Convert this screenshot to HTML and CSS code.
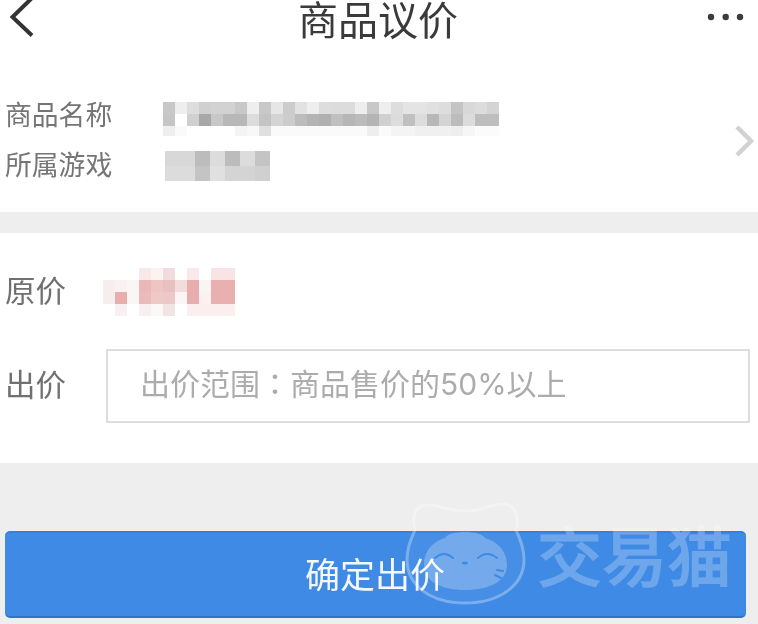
FILE: index.html
```html
<!DOCTYPE html>
<html lang="zh-CN">
<head>
<meta charset="utf-8">
<title>商品议价</title>
<link rel="stylesheet" href="styles.css">
</head>
<body>
<div class="page">
  <header class="nav">
    <svg class="back" width="52" height="70" viewBox="0 0 52 70"><path d="M32 -2L12.500 17L32 35.500"/></svg>
    <h1 class="title">商品议价</h1>
    <svg class="more" width="54" height="70" viewBox="0 0 54 70"><circle cx="7" cy="17" r="3.200"/><circle cx="21.700" cy="17" r="3.200"/><circle cx="36" cy="17" r="3.200"/></svg>
  </header>

  <section class="info">
    <div class="info-rows">
      <div class="info-row">
        <span class="info-label">商品名称</span>
        <svg class="mosaic mosaic-name" width="336" height="34" viewBox="0 0 336 34" shape-rendering="crispEdges">
          <g>
            <rect x="0" width="12" height="12" fill="#c8c8c8"/><rect x="12" width="12" height="12" fill="#eeeeee"/><rect x="24" width="12" height="12" fill="#dddddd"/><rect x="36" width="12" height="12" fill="#d0d0d0"/><rect x="48" width="12" height="12" fill="#d2d2d2"/><rect x="60" width="12" height="12" fill="#d2d2d2"/><rect x="72" width="12" height="12" fill="#c8c8c8"/><rect x="84" width="12" height="12" fill="#eeeeee"/><rect x="96" width="12" height="12" fill="#c8c8c8"/><rect x="108" width="12" height="12" fill="#e6e6e6"/><rect x="120" width="12" height="12" fill="#cccccc"/><rect x="132" width="12" height="12" fill="#e2e2e2"/><rect x="144" width="12" height="12" fill="#eeeeee"/><rect x="156" width="12" height="12" fill="#dddddd"/><rect x="168" width="12" height="12" fill="#dcdcdc"/><rect x="180" width="12" height="12" fill="#dcdcdc"/><rect x="192" width="12" height="12" fill="#eeeeee"/><rect x="204" width="12" height="12" fill="#c8c8c8"/><rect x="216" width="12" height="12" fill="#eeeeee"/><rect x="228" width="12" height="12" fill="#dddddd"/><rect x="240" width="12" height="12" fill="#e4e4e4"/><rect x="252" width="12" height="12" fill="#e4e4e4"/><rect x="264" width="12" height="12" fill="#e0e0e0"/><rect x="276" width="12" height="12" fill="#dddddd"/><rect x="288" width="12" height="12" fill="#c4c4c4"/><rect x="300" width="12" height="12" fill="#d8d8d8"/><rect x="312" width="12" height="12" fill="#dcdcdc"/><rect x="324" width="12" height="12" fill="#d4d4d4"/>
          </g>
          <g>
            <rect x="0" y="12" width="12" height="12" fill="#c6c6c6"/><rect x="12" y="12" width="12" height="12" fill="#ffffff"/><rect x="24" y="12" width="12" height="12" fill="#d0d0d0"/><rect x="36" y="12" width="12" height="12" fill="#a8a8a8"/><rect x="48" y="12" width="12" height="12" fill="#c8c8c8"/><rect x="60" y="12" width="12" height="12" fill="#b8b8b8"/><rect x="72" y="12" width="12" height="12" fill="#b8b8b8"/><rect x="84" y="12" width="12" height="12" fill="#dcdcdc"/><rect x="96" y="12" width="12" height="12" fill="#c4c4c4"/><rect x="108" y="12" width="12" height="12" fill="#d4d4d4"/><rect x="120" y="12" width="12" height="12" fill="#cccccc"/><rect x="132" y="12" width="12" height="12" fill="#bcbcbc"/><rect x="144" y="12" width="12" height="12" fill="#b4b4b4"/><rect x="156" y="12" width="12" height="12" fill="#b0b0b0"/><rect x="168" y="12" width="12" height="12" fill="#c0c0c0"/><rect x="180" y="12" width="12" height="12" fill="#b6b6b6"/><rect x="192" y="12" width="12" height="12" fill="#bcbcbc"/><rect x="204" y="12" width="12" height="12" fill="#b4b4b4"/><rect x="216" y="12" width="12" height="12" fill="#d0d0d0"/><rect x="228" y="12" width="12" height="12" fill="#dcdcdc"/><rect x="240" y="12" width="12" height="12" fill="#c0c0c0"/><rect x="252" y="12" width="12" height="12" fill="#dcdcdc"/><rect x="264" y="12" width="12" height="12" fill="#b8b8b8"/><rect x="276" y="12" width="12" height="12" fill="#d4d4d4"/><rect x="288" y="12" width="12" height="12" fill="#bcbcbc"/><rect x="300" y="12" width="12" height="12" fill="#dcdcdc"/><rect x="312" y="12" width="12" height="12" fill="#bebebe"/><rect x="324" y="12" width="12" height="12" fill="#bebebe"/>
          </g>
          <g>
            <rect x="0" y="24" width="12" height="10" fill="#eeeeee"/><rect x="12" y="24" width="12" height="10" fill="#fafafa"/><rect x="72" y="24" width="12" height="10" fill="#f4f4f4"/><rect x="84" y="24" width="12" height="10" fill="#f8f8f8"/><rect x="96" y="24" width="12" height="10" fill="#e0e0e0"/><rect x="108" y="24" width="96" height="10" fill="#fafafa"/><rect x="204" y="24" width="12" height="10" fill="#eeeeee"/><rect x="216" y="24" width="12" height="10" fill="#fafafa"/><rect x="228" y="24" width="24" height="10" fill="#f4f4f4"/><rect x="252" y="24" width="36" height="10" fill="#f0f0f0"/><rect x="288" y="24" width="12" height="10" fill="#eeeeee"/><rect x="300" y="24" width="12" height="10" fill="#f6f6f6"/><rect x="312" y="24" width="24" height="10" fill="#fbfbfb"/>
          </g>
        </svg>
      </div>
      <div class="info-row">
        <span class="info-label">所属游戏</span>
        <svg class="mosaic mosaic-game" width="105" height="30" viewBox="0 0 105 30" shape-rendering="crispEdges">
          <rect x="0" width="30" height="15" fill="#d8d8d8"/><rect x="30" width="15" height="15" fill="#bcbcbc"/><rect x="45" width="15" height="15" fill="#dcdcdc"/><rect x="60" width="15" height="15" fill="#bcbcbc"/><rect x="75" width="15" height="15" fill="#dcdcdc"/><rect x="90" width="15" height="15" fill="#c4c4c4"/>
          <rect x="0" y="15" width="30" height="15" fill="#dcdcdc"/><rect x="30" y="15" width="15" height="15" fill="#c4c4c4"/><rect x="45" y="15" width="15" height="15" fill="#e0e0e0"/><rect x="60" y="15" width="30" height="15" fill="#d4d4d4"/><rect x="90" y="15" width="15" height="15" fill="#d0d0d0"/>
        </svg>
      </div>
    </div>
    <svg class="chevron" width="20" height="32" viewBox="0 0 20 32"><path d="M2 2L16 16L2 30"/></svg>
  </section>

  <section class="offer">
    <div class="offer-row">
      <span class="offer-label">原价</span>
      <svg class="mosaic mosaic-price" width="132" height="48" viewBox="0 0 132 48" shape-rendering="crispEdges">
        <rect x="36" width="12" height="12" fill="#f8e8e8"/><rect x="48" width="12" height="12" fill="#fbf2f2"/><rect x="60" width="12" height="12" fill="#f0dcdc"/><rect x="84" width="12" height="12" fill="#f8eaea"/><rect x="108" width="24" height="12" fill="#f8e4e4"/>
        <rect x="0" y="12" width="12" height="12" fill="#f6eeee"/><rect x="12" y="12" width="12" height="12" fill="#f8f2f2"/><rect x="24" y="12" width="12" height="12" fill="#fbf6f6"/><rect x="36" y="12" width="12" height="12" fill="#ebb8b8"/><rect x="48" y="12" width="12" height="12" fill="#eec4c4"/><rect x="60" y="12" width="12" height="12" fill="#e8c0c0"/><rect x="72" y="12" width="12" height="12" fill="#f2dcdc"/><rect x="84" y="12" width="12" height="12" fill="#e8aeae"/><rect x="96" y="12" width="12" height="12" fill="#fbf4f4"/><rect x="108" y="12" width="24" height="12" fill="#e9b0b0"/>
        <rect x="0" y="24" width="12" height="12" fill="#f6eeee"/><rect x="12" y="24" width="12" height="12" fill="#e8aeae"/><rect x="24" y="24" width="12" height="12" fill="#fbf6f6"/><rect x="36" y="24" width="12" height="12" fill="#ebbaba"/><rect x="48" y="24" width="12" height="12" fill="#efc8c8"/><rect x="60" y="24" width="12" height="12" fill="#ecc8c8"/><rect x="72" y="24" width="12" height="12" fill="#fbf6f6"/><rect x="84" y="24" width="12" height="12" fill="#e8aeae"/><rect x="96" y="24" width="12" height="12" fill="#fcf0f0"/><rect x="108" y="24" width="24" height="12" fill="#e9b0b0"/>
        <rect x="12" y="36" width="12" height="12" fill="#f8f0f0"/><rect x="36" y="36" width="12" height="12" fill="#f8f0f0"/><rect x="48" y="36" width="12" height="12" fill="#fdf8f8"/><rect x="60" y="36" width="12" height="12" fill="#f0e4e4"/><rect x="84" y="36" width="48" height="12" fill="#fbeeee"/>
      </svg>
    </div>
    <div class="offer-row">
      <label class="offer-label" for="bid">出价</label>
      <input class="bid-input" id="bid" type="text" lang="zh-Hant" placeholder="出价范围：商品售价的50%以上">
    </div>
  </section>

  <div class="actions">
    <button class="confirm" type="button">确定出价</button>
  </div>

  <div class="watermark">
    <svg class="wm-logo" width="124" height="106" viewBox="404 501 124 106">
      <path class="wm-ring" d="M415 530C412 518 414 506 426 505C437 504 448 511 465 511C482 511 492 504 504 504C516 504 519 518 516 530C521 540 524 550 524 560C524 585 500 603 465 603C430 603 407 585 407 560C407 550 410 540 415 530Z"/>
      <path class="wm-head" d="M424 565C424 549 435 541 445 538C449 530 481 530 485 538C496 541 507 550 507 565C507 582 488 590 465 590C442 590 424 582 424 565Z"/>
      <path class="wm-face" d="M435 558Q444 550 453 558M478 558Q487 550 497 558M497 570L503 571M495 575L501 578"/>
      <ellipse class="wm-nose" cx="465" cy="563" rx="3" ry="1.500"/>
    </svg>
    <span class="wm-text">交易猫</span>
  </div>
</div>
</body>
</html>
```

FILE: styles.css
```css
* {
  box-sizing: border-box;
}

html,
body {
  margin: 0;
  padding: 0;
}

body {
  width: 758px;
  height: 624px;
  overflow: hidden;
  background: #eeeeee;
  font-family: "Noto Sans CJK SC", "Noto Sans", sans-serif;
}

.page {
  position: relative;
  width: 758px;
  height: 624px;
  overflow: hidden;
  background: #eeeeee;
  filter: blur(0.45px);
}

.nav {
  display: flex;
  justify-content: space-between;
  height: 70px;
  background: #ffffff;
}

.back path {
  fill: none;
  stroke: #333333;
  stroke-width: 4;
}

.title {
  margin: 0;
  font-size: 40px;
  font-weight: 400;
  line-height: 36px;
  color: #3a3a3a;
}

.more circle {
  fill: #3c3c3c;
}

.info {
  display: flex;
  justify-content: space-between;
  align-items: center;
  height: 142px;
  padding: 0 3px 0 5px;
  background: #ffffff;
}

.info-rows {
  display: flex;
  flex-direction: column;
}

.info-row {
  display: flex;
  align-items: center;
  height: 50px;
}

.info-label {
  width: 158px;
  flex: none;
  padding-bottom: 4px;
  font-size: 26.800px;
  line-height: 46px;
  color: #757575;
}

.mosaic {
  display: block;
  flex: none;
}

.mosaic-name {
  margin-top: 5px;
}

.mosaic-game {
  margin-left: 2px;
}

.chevron path {
  fill: none;
  stroke: #d2d2d2;
  stroke-width: 4.500;
}

.offer {
  display: flex;
  flex-direction: column;
  gap: 33px;
  height: 230px;
  margin-top: 21px;
  padding: 35px 8px 0 5px;
  background: #ffffff;
}

.offer-row {
  display: flex;
  align-items: center;
}

.offer-label {
  width: 101px;
  flex: none;
  padding-bottom: 6px;
  font-size: 30.500px;
  line-height: 42px;
  color: #707070;
}

.mosaic-price {
  margin-left: -3px;
}

.bid-input {
  flex: 1;
  min-width: 0;
  height: 74px;
  padding: 0 0 5px 32px;
  border: 2px solid #dddddd;
  border-radius: 0;
  outline: 0;
  background: #ffffff;
  font: 400 30px "Inter", "Noto Sans CJK TC", sans-serif;
  color: #333333;
}

.bid-input::placeholder {
  color: #acacac;
  opacity: 1;
}

.actions {
  padding: 68px 12px 0 5px;
}

.confirm {
  display: block;
  width: 100%;
  height: 87px;
  padding: 0 1px 4px 0;
  border: 0;
  border-top: 2px solid #367fdb;
  border-bottom: 2px solid #3573c4;
  border-radius: 5px;
  background: #3f8ae5;
  font: 400 35px "Noto Sans CJK SC", sans-serif;
  color: #f4f8fd;
}

.watermark {
  position: absolute;
  left: 404px;
  top: 501px;
  display: flex;
  align-items: center;
  gap: 9px;
  pointer-events: none;
}

.wm-logo {
  display: block;
  flex: none;
}

.wm-ring {
  fill: rgba(255, 255, 255, 0.04);
  stroke: rgba(255, 255, 255, 0.3);
  stroke-width: 3;
}

.wm-head {
  fill: rgba(255, 255, 255, 0.25);
}

.wm-face {
  fill: none;
  stroke: #3f8ae5;
  stroke-width: 2;
  stroke-linecap: round;
}

.wm-nose {
  fill: #3f8ae5;
}

.wm-text {
  margin-top: -2px;
  font-size: 65px;
  font-weight: 500;
  line-height: 70px;
  color: #ffffff;
  opacity: 0.24;
  -webkit-text-stroke: 1px #ffffff;
}
```
